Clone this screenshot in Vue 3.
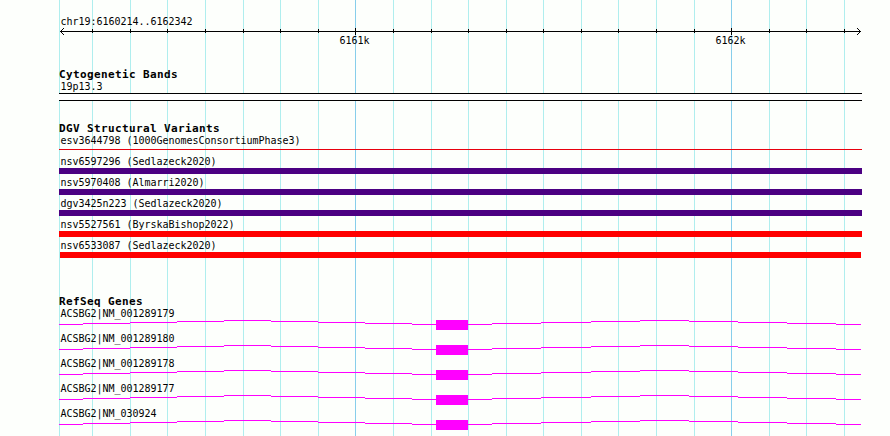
<template>
  <div class="browser">
    <svg class="grid" width="890" height="436" shape-rendering="crispEdges">
      <rect
        v-for="x in gridLines"
        :key="x"
        :x="x"
        y="0"
        width="1"
        height="436"
        :fill="isMajor(x) ? '#87ceeb' : '#afeeee'"
      />
    </svg>

    <div class="tracks">
      <section class="ruler">
        <div class="label">chr19:6160214..6162342</div>
        <svg class="axis" width="803" height="7" shape-rendering="crispEdges">
          <rect x="1" y="3" width="801" height="1" />
          <path d="M1 3h1v1h-1zM2 2h1v1h-1zM3 1h1v1h-1zM4 0h1v1h-1zM2 4h1v1h-1zM3 5h1v1h-1zM4 6h1v1h-1z" />
          <path d="M801 3h1v1h-1zM800 2h1v1h-1zM799 1h1v1h-1zM798 0h1v1h-1zM800 4h1v1h-1zM799 5h1v1h-1zM798 6h1v1h-1z" />
          <rect
            v-for="x in gridLines.slice(1)"
            :key="x"
            :x="x - 59"
            :y="isMajor(x) ? 0 : 1"
            width="1"
            :height="isMajor(x) ? 7 : 4"
          />
        </svg>
        <div class="scale">
          <span>6161k</span>
          <span>6162k</span>
        </div>
      </section>

      <section class="cytobands">
        <h3>Cytogenetic Bands</h3>
        <div class="label">19p13.3</div>
        <div class="band"></div>
      </section>

      <section class="variants">
        <h3>DGV Structural Variants</h3>
        <div v-for="v in variants" :key="v.name" class="variant">
          <div class="label">{{ v.name }} ({{ v.study }})</div>
          <div class="bar" :class="v.type"></div>
        </div>
      </section>

      <section class="genes">
        <h3>RefSeq Genes</h3>
        <div v-for="gene in genes" :key="gene" class="gene">
          <div class="label">ACSBG2|{{ gene }}</div>
          <svg width="803" height="10" shape-rendering="crispEdges">
            <rect
              v-for="s in intronSteps"
              :key="s.x"
              :x="s.x"
              :y="s.y"
              :width="s.width"
              height="1"
            />
            <rect x="377" y="0" width="32" height="10" />
          </svg>
        </div>
      </section>
    </div>
  </div>
</template>

<script setup>
const gridLines = [
  59, 92, 130, 167, 205, 243, 280, 318, 355, 393, 431,
  468, 506, 543, 581, 618, 656, 694, 731, 769, 806, 844
]

const isMajor = (x) => x === 355 || x === 731

const variants = [
  { name: 'esv3644798', study: '1000GenomesConsortiumPhase3', type: 'thin' },
  { name: 'nsv6597296', study: 'Sedlazeck2020', type: 'complex' },
  { name: 'nsv5970408', study: 'Almarri2020', type: 'complex' },
  { name: 'dgv3425n223', study: 'Sedlazeck2020', type: 'complex' },
  { name: 'nsv5527561', study: 'ByrskaBishop2022', type: 'loss' },
  { name: 'nsv6533087', study: 'Sedlazeck2020', type: 'loss short' }
]

const genes = ['NM_001289179', 'NM_001289180', 'NM_001289178', 'NM_001289177', 'NM_030924']

// introns rise and fall one pixel at a time
const levels = [4, 3, 2, 1, 0, 1, 2, 3, 4]
const leftEdges = [0, 24, 71, 118, 165, 212, 259, 306, 353, 377]
const rightEdges = [409, 433, 482, 532, 581, 630, 679, 728, 777, 802]

const toSteps = (edges) =>
  levels.map((y, i) => ({ x: edges[i], y, width: edges[i + 1] - edges[i] }))

const intronSteps = [...toSteps(leftEdges), ...toSteps(rightEdges)]
</script>

<style>
body {
  margin: 0;
  background: #fdfffc;
}
</style>

<style scoped>
.browser {
  position: relative;
  width: 890px;
  height: 436px;
  overflow: hidden;
  background: #fdfffc;
  color: #000;
  font-family: "DejaVu Sans Mono", monospace;
}

.grid {
  position: absolute;
  top: 0;
  left: 0;
}

.tracks {
  position: relative;
  width: 803px;
  padding: 15px 0 0 59px;
}

svg {
  display: block;
}

h3 {
  height: 12px;
  margin: 0;
  font-size: 11px;
  font-weight: bold;
  line-height: 14px;
  letter-spacing: 0.378px;
}

.label,
.scale {
  height: 12px;
  padding-left: 1.4px;
  font-size: 10px;
  line-height: 14px;
  letter-spacing: -0.02px;
  white-space: pre;
}

.axis {
  margin-top: 1px;
}

.scale {
  display: flex;
  gap: 346px;
  padding-left: 280.4px;
  line-height: 12px;
}

.cytobands {
  padding-top: 21px;
}

.band {
  height: 6px;
  margin-top: 1px;
  border-top: 1px solid #000;
  border-bottom: 1px solid #000;
  background: #fff;
}

.variants {
  padding-top: 21px;
}

.variant {
  height: 21px;
}

.bar {
  height: 6px;
  margin-top: 1px;
}

.bar.thin {
  height: 1px;
  margin-top: 3px;
  background: #e8000e;
}

.bar.complex {
  background: #4b0082;
}

.bar.loss {
  background: #f00;
}

.bar.short {
  margin-left: 1px;
  margin-right: 1px;
}

.genes {
  padding-top: 35px;
}

.gene {
  height: 25px;
}

.gene svg {
  margin-top: 1px;
  fill: #f0f;
}
</style>
